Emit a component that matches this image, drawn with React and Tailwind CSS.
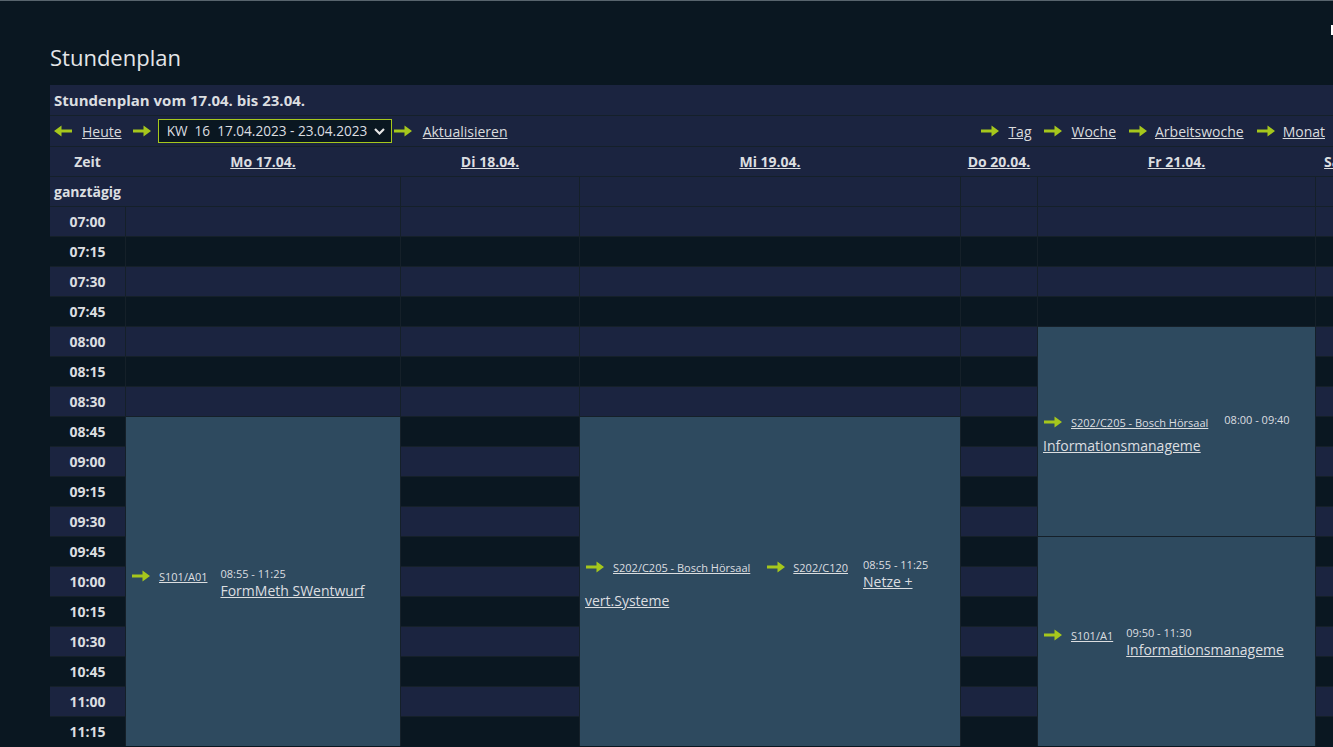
import React from "react";

const TIMES = [
  "07:00", "07:15", "07:30", "07:45", "08:00", "08:15", "08:30", "08:45", "09:00",
  "09:15", "09:30", "09:45", "10:00", "10:15", "10:30", "10:45", "11:00", "11:15",
];

const DAYS = ["Mo 17.04.", "Di 18.04.", "Mi 19.04.", "Do 20.04.", "Fr 21.04.", "Sa 22.04.", "So 23.04."];

// day index -> time indices covered by an event
const COVERED = {
  0: [7, 17],
  2: [7, 17],
  4: [4, 17],
};

const isCovered = (d, t) => COVERED[d] && t >= COVERED[d][0] && t <= COVERED[d][1];

const Arrow = ({ left = false, className = "" }) => (
  <svg width="19" height="12" viewBox="0 0 19 12" className={"shrink-0 " + className}>
    <path d={left ? "M0 6L7.5 0.5V4.5H18V7.5H7.5V11.5Z" : "M19 6L11.5 0.5V4.5H1V7.5H11.5V11.5Z"} fill="#a6c71c" />
  </svg>
);

const Room = ({ children, className = "" }) => (
  <a className={"text-[11px] leading-[15px] underline whitespace-nowrap text-[#dcdee0] " + className}>{children}</a>
);

const Time = ({ children }) => <span className="text-[11px] leading-[15px] whitespace-nowrap">{children}</span>;

const Title = ({ children, className = "" }) => (
  <a className={"text-[14px] leading-[19px] underline whitespace-nowrap " + className}>{children}</a>
);

const NavLink = ({ children, className = "" }) => (
  <a className={"underline text-[14px] text-[#d9dbdd] " + className}>{children}</a>
);

const App = () => {
  return (
    <div className="relative w-screen h-screen overflow-hidden bg-[#0a1721] border-t border-[#58646d] font-['Open_Sans',sans-serif] text-[#dcdee0]">
      <span className="absolute right-0 top-[24px] w-[2px] h-[10px] bg-white" />
      <div className="ml-[50px] pt-[41px]">
        <h1 className="text-[22px] leading-[30px] font-normal text-[#e4e6e8] mb-[13px]">Stundenplan</h1>

        <div className="flex flex-col gap-px bg-[#152029]">
          {/* Title */}
          <div className="h-[30px] bg-[#1b2440] flex items-center pl-[4px] text-[15px] font-bold">
            Stundenplan vom 17.04. bis 23.04.
          </div>

          {/* Navigation */}
          <div className="h-[30px] bg-[#1b2440] flex items-center pl-[4px] pr-[8px]">
            <Arrow left />
            <NavLink className="ml-[9px]">Heute</NavLink>
            <Arrow className="ml-[10px]" />
            <div className="ml-[7px] w-[234px] h-[24px] border border-[#a6c71c] bg-[#0a1721] flex items-center pl-[8px] pr-[5px] text-[13.6px] whitespace-pre">
              <span className="flex-1">KW  16  17.04.2023 - 23.04.2023</span>
              <svg width="11" height="7" viewBox="0 0 11 7" className="mr-[1px]">
                <path d="M1 1L5.5 5.5L10 1" stroke="#e6e6e6" strokeWidth="2.2" fill="none" />
              </svg>
            </div>
            <Arrow className="ml-[1px]" />
            <NavLink className="ml-[11px]">Aktualisieren</NavLink>

            <div className="ml-auto flex items-center">
              <Arrow />
              <NavLink className="ml-[9px]">Tag</NavLink>
              <Arrow className="ml-[12px]" />
              <NavLink className="ml-[9px]">Woche</NavLink>
              <Arrow className="ml-[12px]" />
              <NavLink className="ml-[8px]">Arbeitswoche</NavLink>
              <Arrow className="ml-[12px]" />
              <NavLink className="ml-[8px]">Monat</NavLink>
            </div>
          </div>

          {/* Schedule grid */}
          <div className="grid w-max gap-px bg-[#152029] grid-cols-[75px_274px_178px_380px_76px_277px_76px_76px] auto-rows-[29px]">
            <div className="col-span-full grid gap-px bg-[#1b2440] grid-cols-[75px_274px_178px_380px_76px_277px_76px_76px] text-[14px] font-bold">
              <div className="flex items-center justify-center">Zeit</div>
              {DAYS.map((d) => (
                <div key={d} className="flex items-center justify-center">
                  <a className="underline whitespace-nowrap">{d}</a>
                </div>
              ))}
            </div>

            <div className="-mr-px bg-[#1b2440] flex items-center pl-[4px] text-[14px] font-bold">ganztägig</div>
            {DAYS.map((d) => (
              <div key={d} className="bg-[#1b2440]" />
            ))}

            {TIMES.map((t, ti) => {
              const bg = ti % 2 === 0 ? "bg-[#1b2440]" : "bg-[#0a1721]";
              return (
                <React.Fragment key={t}>
                  <div className={bg + " flex items-center justify-center text-[14px] font-bold"}>{t}</div>
                  {DAYS.map((d, di) => (isCovered(di, ti) ? null : <div key={d} className={bg} />))}
                </React.Fragment>
              );
            })}

            {/* Mo */}
            <div className="col-start-2 row-start-10 row-span-11 bg-[#2e4a5f] flex flex-col justify-center pl-[5px] pt-[2px]">
              <div className="flex items-start">
                <Arrow className="mt-[4px]" />
                <Room className="ml-[9px] mt-[3px]">S101/A01</Room>
                <div className="ml-[13px] flex flex-col items-start">
                  <Time>08:55 - 11:25</Time>
                  <Title>FormMeth SWentwurf</Title>
                </div>
              </div>
            </div>

            {/* Mi */}
            <div className="col-start-4 row-start-10 row-span-11 bg-[#2e4a5f] flex flex-col justify-center pl-[5px] pt-[3px]">
              <div className="flex items-start">
                <Arrow className="mt-[4px]" />
                <Room className="ml-[9px] mt-[3px]">S202/C205 - Bosch Hörsaal</Room>
                <Arrow className="ml-[16px] mt-[4px]" />
                <Room className="ml-[8px] mt-[3px]">S202/C120</Room>
                <div className="ml-[15px] flex flex-col items-start">
                  <Time>08:55 - 11:25</Time>
                  <Title>Netze +</Title>
                </div>
              </div>
              <Title className="self-start">vert.Systeme</Title>
            </div>

            {/* Fr 1 */}
            <div className="col-start-6 row-start-7 row-span-7 bg-[#2e4a5f] flex flex-col justify-center pl-[5px] pt-[3px]">
              <div className="flex items-start">
                <Arrow className="mt-[4px]" />
                <Room className="ml-[9px] mt-[3px]">S202/C205 - Bosch Hörsaal</Room>
                <div className="ml-[16px] flex flex-col items-start">
                  <Time>08:00 - 09:40</Time>
                </div>
              </div>
              <Title className="self-start mt-[6px]">Informationsmanageme</Title>
            </div>

            {/* Fr 2 */}
            <div className="col-start-6 row-start-14 row-span-7 bg-[#2e4a5f] flex flex-col justify-center pl-[5px] pt-[1px]">
              <div className="flex items-start">
                <Arrow className="mt-[4px]" />
                <Room className="ml-[9px] mt-[3px]">S101/A1</Room>
                <div className="ml-[13px] flex flex-col items-start">
                  <Time>09:50 - 11:30</Time>
                  <Title>Informationsmanageme</Title>
                </div>
              </div>
            </div>
          </div>
        </div>
      </div>
    </div>
  );
};

export default App;
